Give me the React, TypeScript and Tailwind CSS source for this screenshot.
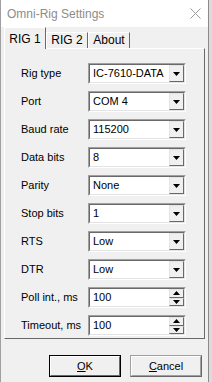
import React from "react";

const rows: { label: string; value: string; kind: "combo" | "spin" }[] = [
  { label: "Rig type", value: "IC-7610-DATA", kind: "combo" },
  { label: "Port", value: "COM 4", kind: "combo" },
  { label: "Baud rate", value: "115200", kind: "combo" },
  { label: "Data bits", value: "8", kind: "combo" },
  { label: "Parity", value: "None", kind: "combo" },
  { label: "Stop bits", value: "1", kind: "combo" },
  { label: "RTS", value: "Low", kind: "combo" },
  { label: "DTR", value: "Low", kind: "combo" },
  { label: "Poll int., ms", value: "100", kind: "spin" },
  { label: "Timeout, ms", value: "100", kind: "spin" },
];

function DropButton() {
  return (
    <div className="flex w-[15px] items-center justify-center border border-t-[#e3e3e3] border-l-[#e3e3e3] border-r-[#696969] border-b-[#696969] bg-[#f0f0f0]">
      <svg width="7" height="4" viewBox="0 0 7 4">
        <path d="M0 0h7L3.5 4z" fill="#000" />
      </svg>
    </div>
  );
}

function SpinButton() {
  return (
    <div className="flex w-[15px] flex-col">
      <div className="flex flex-1 items-center justify-center border border-t-[#e3e3e3] border-l-[#e3e3e3] border-r-[#696969] border-b-[#696969] bg-[#f0f0f0]">
        <svg width="7" height="4" viewBox="0 0 7 4">
          <path d="M0 4h7L3.5 0z" fill="#000" />
        </svg>
      </div>
      <div className="flex flex-1 items-center justify-center border border-t-[#e3e3e3] border-l-[#e3e3e3] border-r-[#696969] border-b-[#696969] bg-[#f0f0f0]">
        <svg width="7" height="4" viewBox="0 0 7 4">
          <path d="M0 0h7L3.5 4z" fill="#000" />
        </svg>
      </div>
    </div>
  );
}

function Field({ value, kind }: { value: string; kind: "combo" | "spin" }) {
  return (
    <div className="flex h-[21px] w-[98px] border border-t-[#a0a0a0] border-l-[#a0a0a0] border-r-white border-b-white">
      <div className="flex flex-1 border border-t-[#696969] border-l-[#696969] border-r-[#e3e3e3] border-b-[#e3e3e3] bg-white">
        <div className="flex flex-1 items-center pl-[3px] leading-none">{value}</div>
        {kind === "combo" ? <DropButton /> : <SpinButton />}
      </div>
    </div>
  );
}

function Tab({ label, active }: { label: string; active?: boolean }) {
  if (active) {
    return (
      <div className="relative z-10 -mb-px flex h-[22px] w-[42px] items-center justify-center border-l border-t border-r border-l-white border-t-white border-r-[#696969] bg-[#f0f0f0] text-[12px]">
        {label}
      </div>
    );
  }
  return (
    <div className="mt-[5px] flex h-[16px] w-[42px] items-center justify-center border-l border-t border-r border-l-white border-t-white border-r-[#696969] bg-[#f0f0f0] pb-[2px] text-[12px]">
      {label}
    </div>
  );
}

export default function App() {
  return (
    <div className="flex h-[382px] w-[212px] overflow-hidden bg-white font-['Liberation_Sans',Arial,sans-serif] text-[11px] text-black">
      <div className="flex w-[208px] flex-col border-l border-[#a0a0a0] bg-[#f0f0f0]">
        <div className="flex h-[27px] items-center justify-between bg-white pl-[6px] pr-[7px]">
          <span className="text-[12px] text-[#8c8c8c]">Omni-Rig Settings</span>
          <svg width="11" height="11" viewBox="0 0 11 11">
            <path d="M0.5 0.5l10 10M10.5 0.5l-10 10" stroke="#9a9a9a" strokeWidth="1" />
          </svg>
        </div>

        <div className="flex pl-[3px]">
          <Tab label="RIG 1" active />
          <Tab label="RIG 2" />
          <Tab label="About" />
        </div>

        <div className="ml-[3px] flex w-[201px] flex-col gap-[7px] border border-t-white border-l-white border-r-[#696969] border-b-[#696969] pb-[2px] pl-[16px] pt-[14px]">
          {rows.map((r) => (
            <div key={r.label} className="flex h-[21px] items-center">
              <div className="w-[67px]">{r.label}</div>
              <Field value={r.value} kind={r.kind} />
            </div>
          ))}
        </div>

        <div className="mt-[16px] flex justify-end gap-[9px] pr-[6px]">
          <button className="h-[22px] w-[72px] border border-black">
            <div className="flex h-full w-full items-center justify-center border border-t-white border-l-white border-r-[#696969] border-b-[#696969]">
              <span>
                <span className="underline">O</span>K
              </span>
            </div>
          </button>
          <button className="h-[22px] w-[72px] border border-t-[#a0a0a0] border-l-[#a0a0a0] border-r-[#696969] border-b-[#696969]">
            <div className="flex h-full w-full items-center justify-center border border-t-white border-l-white border-r-[#a0a0a0] border-b-[#a0a0a0]">
              <span>
                <span className="underline">C</span>ancel
              </span>
            </div>
          </button>
        </div>
      </div>
      <div className="w-[4px] border-l border-[#8a8a8a] bg-[#dcdcdc]" />
    </div>
  );
}
